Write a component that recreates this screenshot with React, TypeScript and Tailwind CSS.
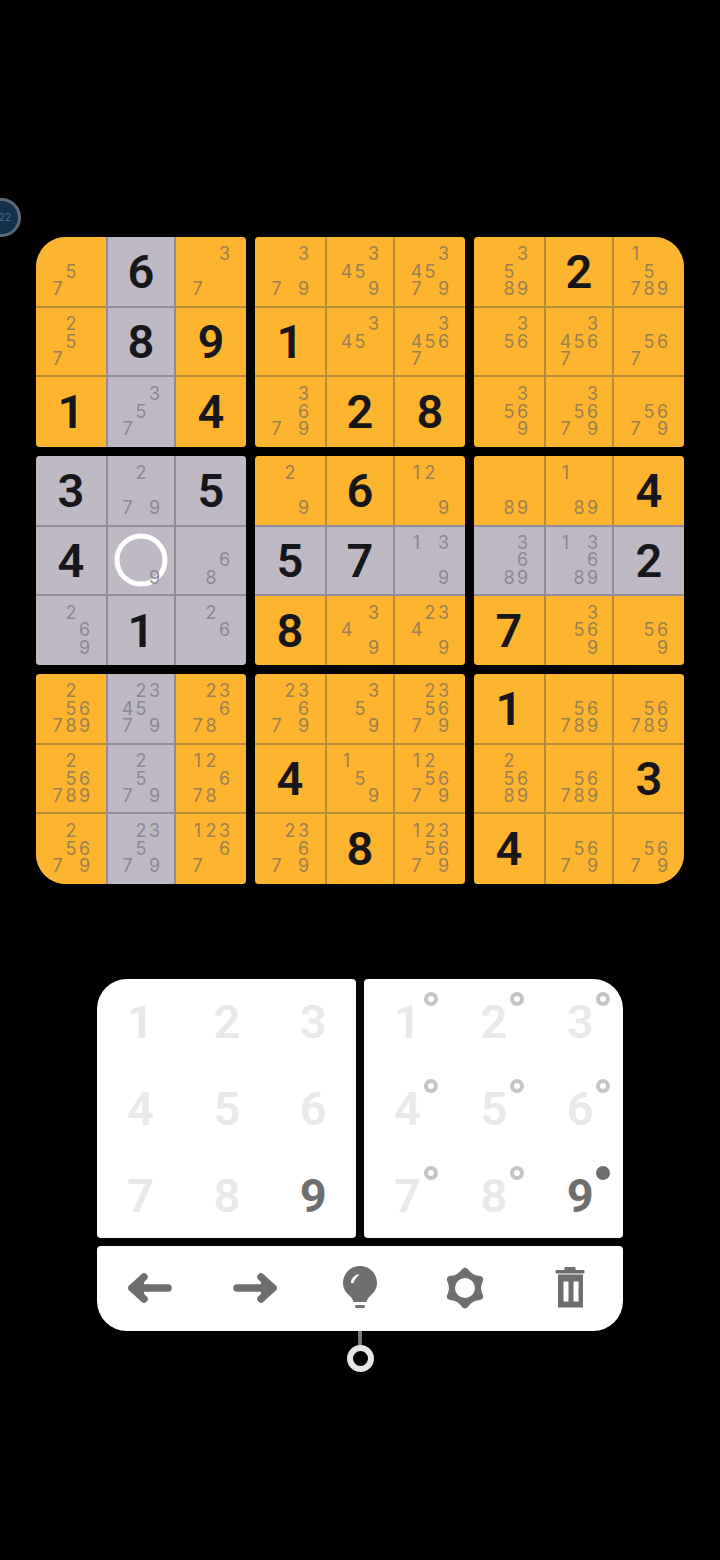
import clsx from "clsx";

type Cell = { big?: number; notes?: string };

const B = (n: number): Cell => ({ big: n });
const N = (s: string): Cell => ({ notes: s });

const board: Cell[][] = [
  [N("57"), B(6), N("37"), N("379"), N("3459"), N("34579"), N("3589"), B(2), N("15789")],
  [N("257"), B(8), B(9), B(1), N("345"), N("34567"), N("356"), N("34567"), N("567")],
  [B(1), N("357"), B(4), N("3679"), B(2), B(8), N("3569"), N("35679"), N("5679")],
  [B(3), N("279"), B(5), N("29"), B(6), N("129"), N("89"), N("189"), B(4)],
  [B(4), N("9"), N("68"), B(5), B(7), N("139"), N("3689"), N("13689"), B(2)],
  [N("269"), B(1), N("26"), B(8), N("349"), N("2349"), B(7), N("3569"), N("569")],
  [N("256789"), N("234579"), N("23678"), N("23679"), N("359"), N("235679"), B(1), N("56789"), N("56789")],
  [N("256789"), N("2579"), N("12678"), B(4), N("159"), N("125679"), N("25689"), N("56789"), B(3)],
  [N("25679"), N("23579"), N("12367"), N("23679"), B(8), N("1235679"), B(4), N("5679"), N("5679")],
];

const isGray = (r: number, c: number) =>
  r === 4 || c === 1 || (r >= 3 && r <= 5 && c <= 2);

// wavy hexagon outline of the settings icon
const gearPath = (() => {
  const pts: [number, number][] = [];
  for (let i = 0; i < 12; i++) {
    const a = (Math.PI / 6) * i - Math.PI / 2;
    const rad = i % 2 === 0 ? 23.1 : 14.7;
    pts.push([21 + rad * Math.cos(a), 21 + rad * Math.sin(a)]);
  }
  const mid = (p: [number, number], q: [number, number]) =>
    `${((p[0] + q[0]) / 2).toFixed(2)} ${((p[1] + q[1]) / 2).toFixed(2)}`;
  let d = `M${mid(pts[11], pts[0])}`;
  pts.forEach((p, i) => {
    d += ` Q${p[0].toFixed(2)} ${p[1].toFixed(2)} ${mid(p, pts[(i + 1) % 12])}`;
  });
  return d + " Z M21 11 A10 10 0 1 0 21 31 A10 10 0 1 0 21 11 Z";
})();

function Notes({ value, gray }: { value: string; gray: boolean }) {
  return (
    <div className="relative grid grid-cols-[13.5px_13.5px_13.5px] grid-rows-[17.5px_17.5px_17.5px] items-center justify-items-center">
      {[1, 2, 3, 4, 5, 6, 7, 8, 9].map((n) => (
        <span
          key={n}
          className={clsx(
            "text-[18px] leading-none font-normal",
            gray ? "text-[#8c8794]" : "text-[#9a8052]"
          )}
        >
          {value.includes(String(n)) ? n : ""}
        </span>
      ))}
    </div>
  );
}

function SudokuCell({ r, c }: { r: number; c: number }) {
  const cell = board[r][c];
  const gray = isGray(r, c);
  const selected = r === 4 && c === 1;
  return (
    <div
      className={clsx(
        "relative flex items-center justify-center",
        gray ? "bg-[#bfb9c6] outline-2 outline-[#938d98]" : "bg-[#fdb52f]"
      )}
    >
      {selected && (
        <div className="absolute left-1/2 top-1/2 size-[53px] -translate-x-1/2 -translate-y-1/2 rounded-full border-[5px] border-white" />
      )}
      {cell.big ? (
        <span className="font-['Roboto'] text-[47px] leading-none font-semibold text-[#17161a]">{cell.big}</span>
      ) : (
        <Notes value={cell.notes ?? ""} gray={gray} />
      )}
    </div>
  );
}

function Box({ br, bc }: { br: number; bc: number }) {
  const rounded = clsx(
    "rounded-[4px]",
    br === 0 && bc === 0 && "rounded-tl-[30px]",
    br === 0 && bc === 2 && "rounded-tr-[30px]",
    br === 2 && bc === 0 && "rounded-bl-[30px]",
    br === 2 && bc === 2 && "rounded-br-[30px]"
  );
  const cells = [];
  for (let i = 0; i < 3; i++) {
    for (let j = 0; j < 3; j++) {
      cells.push(<SudokuCell key={`${i}-${j}`} r={br * 3 + i} c={bc * 3 + j} />);
    }
  }
  return (
    <div
      className={clsx(
        "relative grid h-[209.5px] w-[210px] grid-cols-[70px_66px_70px] grid-rows-[69px_67px_69.5px] gap-[2px] overflow-hidden bg-[#b58d38]",
        rounded
      )}
    >
      {cells}
    </div>
  );
}

function PadDigit({ n, note }: { n: number; note?: boolean }) {
  const active = n === 9;
  return (
    <div className="relative flex h-[87px] w-[87px] items-center justify-center">
      <span
        className={clsx(
          "font-['Roboto'] text-[47px] leading-none",
          active ? "font-bold text-[#6e6e6e]" : "font-semibold text-[#e8e8e8]"
        )}
      >
        {n}
      </span>
      {note && (
        <div
          className={clsx(
            "absolute left-[59.5px] top-[14px] size-[14px] rounded-full",
            active ? "bg-[#6e6e6e]" : "border-[4px] border-[#c4c4c4]"
          )}
        />
      )}
    </div>
  );
}

function Pad({ note, className }: { note?: boolean; className: string }) {
  return (
    <div className={clsx("flex h-[259px] w-[259px] items-center justify-center bg-white", className)}>
      <div className="grid grid-cols-3">
        {[1, 2, 3, 4, 5, 6, 7, 8, 9].map((n) => (
          <PadDigit key={n} n={n} note={note} />
        ))}
      </div>
    </div>
  );
}

function ArrowIcon({ flip }: { flip?: boolean }) {
  return (
    <svg width="46" height="32" viewBox="0 0 46 32" className={flip ? "-scale-x-100" : ""}>
      <path
        d="M17 5 L5 16 L17 27 M5 16 H41"
        fill="none"
        stroke="#6e6e6e"
        strokeWidth="7.5"
        strokeLinecap="round"
        strokeLinejoin="round"
      />
      <path d="M17 5 L5 16 L17 27 Z" fill="#6e6e6e" />
    </svg>
  );
}

function BulbIcon() {
  return (
    <svg width="36" height="46" viewBox="0 0 36 46">
      <path
        d="M18 1 C8.5 1 1 8.5 1 18 C1 24.5 5 28.5 8 31 C10 33 11 35 11.5 37 H24.5 C25 35 26 33 28 31 C31 28.5 35 24.5 35 18 C35 8.5 27.5 1 18 1 Z"
        fill="#6e6e6e"
      />
      <path d="M9 17 C9.5 13 13 9.5 17.5 9 C15 12 12.5 14.5 11.5 18 C10.5 18.5 9 18.5 9 17 Z" fill="#fff" />
      <rect x="13" y="40" width="10" height="3" rx="1.5" fill="#6e6e6e" />
    </svg>
  );
}

function GearIcon() {
  return (
    <svg width="42" height="42" viewBox="0 0 42 42">
      <path fillRule="evenodd" d={gearPath} fill="#6e6e6e" />
    </svg>
  );
}

function TrashIcon() {
  return (
    <svg width="30" height="42" viewBox="0 0 30 42">
      <rect x="9.5" y="0" width="11" height="4" rx="1" fill="#6e6e6e" />
      <rect x="0.5" y="3" width="29" height="3.5" rx="1" fill="#6e6e6e" />
      <path
        fillRule="evenodd"
        d="M3 7.5 H28 V40.5 H3 Z M8.5 14.5 V34.5 H13.5 V14.5 Z M18.5 14.5 V34.5 H23.5 V14.5 Z"
        fill="#6e6e6e"
      />
    </svg>
  );
}

export default function App() {
  return (
    <div
      className="relative h-[1560px] w-[720px] overflow-hidden bg-black pt-[237px]"
      style={{ fontFamily: 'Inter, sans-serif' }}
    >
      <div className="absolute left-[-18px] top-[198px] flex size-[39px] items-center justify-end rounded-full border-[3px] border-[#5c6b78] bg-[#15304b] pr-[7px] text-[10px] text-[#56697b]">
        22
      </div>

      <div className="ml-[36px] grid w-[648px] grid-cols-3 gap-[9px]">
        {[0, 1, 2].flatMap((br) => [0, 1, 2].map((bc) => <Box key={`${br}${bc}`} br={br} bc={bc} />))}
      </div>

      <div className="mt-[95px] flex flex-col items-center">
        <div className="flex gap-[8px]">
          <Pad className="rounded-[4px] rounded-tl-[30px]" />
          <Pad note className="rounded-[4px] rounded-tr-[30px]" />
        </div>
        <div className="mt-[8px] grid h-[85px] w-[526px] grid-cols-5 items-center justify-items-center rounded-[4px] rounded-b-[30px] bg-white">
          <ArrowIcon />
          <ArrowIcon flip />
          <BulbIcon />
          <GearIcon />
          <TrashIcon />
        </div>
        <div className="h-[15px] w-[4px] bg-[#777777]" />
        <div className="mt-[-1px] size-[27px] rounded-full border-[6px] border-[#e6e6e6]" />
      </div>
    </div>
  );
}
